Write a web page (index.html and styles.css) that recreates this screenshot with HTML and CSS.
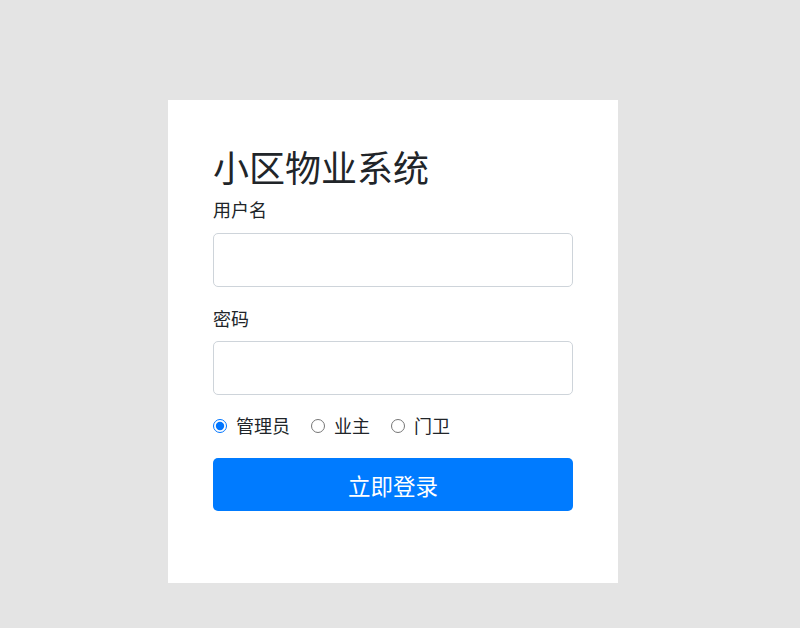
FILE: index.html
```html
<!DOCTYPE html>
<html lang="zh-CN">
<head>
<meta charset="utf-8">
<title>小区物业系统</title>
<link rel="stylesheet" href="styles.css">
</head>
<body>
<main class="page">
  <form class="card">
    <h1 class="title">小区物业系统</h1>
    <div class="field">
      <label class="label" for="username">用户名</label>
      <input class="input" id="username" type="text">
    </div>
    <div class="field">
      <label class="label" for="password">密码</label>
      <input class="input" id="password" type="password">
    </div>
    <div class="roles">
      <label class="role"><input class="radio" type="radio" name="role" checked><span>管理员</span></label>
      <label class="role"><input class="radio" type="radio" name="role"><span>业主</span></label>
      <label class="role"><input class="radio" type="radio" name="role"><span>门卫</span></label>
    </div>
    <button class="submit" type="button">立即登录</button>
  </form>
</main>
</body>
</html>
```
FILE: styles.css
```css
* { box-sizing: border-box; }
html, body {
  margin: 0;
  padding: 0;
  height: 100%;
}
body {
  background: #e4e4e4;
  font-family: "Noto Sans CJK SC", "Noto Sans", sans-serif;
  color: #212529;
}
.page {
  padding-top: 100px;
  padding-left: 168px;
}
.card {
  width: 450px;
  background: #ffffff;
  padding: 45px 45px 72px 45px;
  display: flex;
  flex-direction: column;
}
.title {
  margin: 0 0 8px 0;
  font-size: 36px;
  line-height: 43px;
  font-weight: 400;
  letter-spacing: 0;
}
.field {
  display: flex;
  flex-direction: column;
  margin-bottom: 18px;
}
.label {
  font-size: 18px;
  line-height: 27px;
  margin-bottom: 10px;
}
.field + .field .label {
  margin-bottom: 9px;
}
.input {
  width: 360px;
  height: 54px;
  border: 1px solid #ced4da;
  border-radius: 5px;
  background: #fff;
  font-size: 20px;
  padding: 0 16px;
  outline: none;
}
.roles {
  display: flex;
  align-items: center;
  height: 27px;
  margin-top: -1px;
  margin-bottom: 19px;
}
.role {
  display: flex;
  align-items: center;
  font-size: 18px;
  line-height: 27px;
  margin-right: 21px;
}
.role:last-child { margin-right: 0; }
.radio {
  width: 14px;
  height: 14px;
  margin: 0 9px 0 0;
  accent-color: #0075ff;
}
.submit {
  width: 360px;
  height: 53px;
  border: 0;
  border-radius: 5px;
  background: #007bff;
  color: #ffffff;
  font-family: "Noto Sans CJK SC", "Noto Sans", sans-serif;
  font-size: 22.5px;
  line-height: 30px;
  padding: 0;
  cursor: pointer;
}
```
